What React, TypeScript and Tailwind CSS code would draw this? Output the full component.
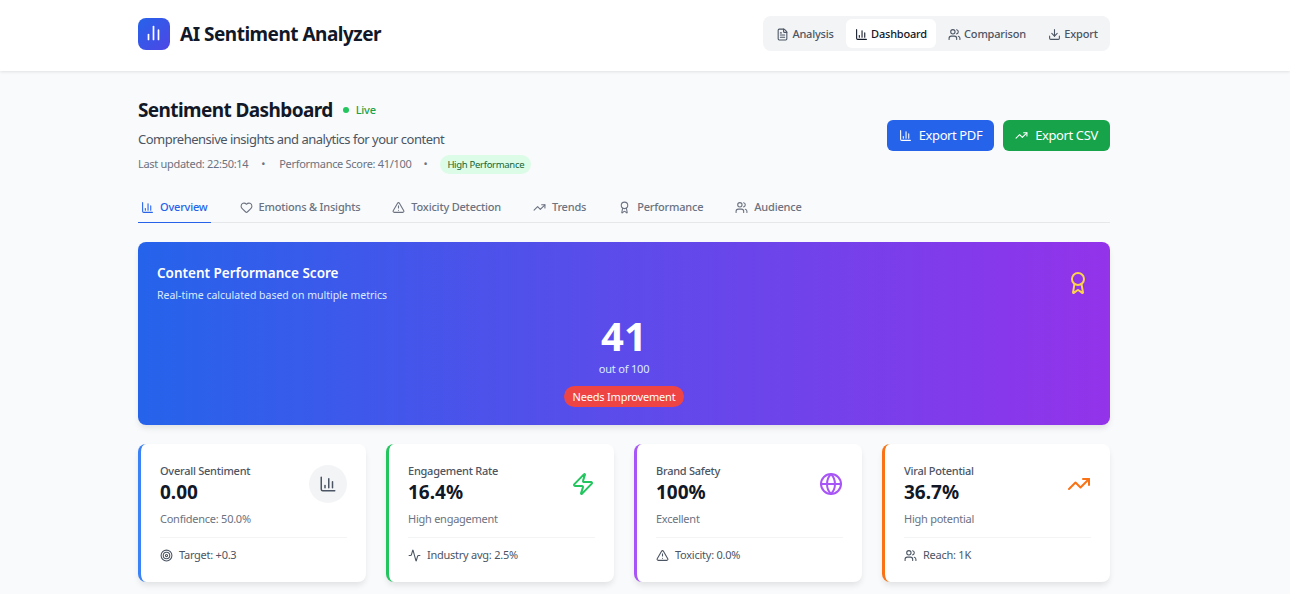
import {
  Activity,
  Award,
  ChartColumn,
  Download,
  FileText,
  Globe,
  Heart,
  Target,
  TrendingUp,
  TriangleAlert,
  Users,
  Zap,
} from "lucide-react"

const navItems = [
  { label: "Analysis", icon: FileText, className: "w-[70px] ml-[7px]" },
  { label: "Dashboard", icon: ChartColumn, className: "w-[90px] ml-[6px]", active: true },
  { label: "Comparison", icon: Users, className: "w-[90px] ml-[6px]" },
  { label: "Export", icon: Download, className: "w-[66px] ml-[8px]" },
]

const tabs = [
  { label: "Overview", icon: ChartColumn, active: true },
  { label: "Emotions & Insights", icon: Heart },
  { label: "Toxicity Detection", icon: TriangleAlert },
  { label: "Trends", icon: TrendingUp },
  { label: "Performance", icon: Award },
  { label: "Audience", icon: Users },
]

const cards = [
  {
    title: "Overall Sentiment",
    value: "0.00",
    note: "Confidence: 50.0%",
    foot: "Target: +0.3",
    footIcon: Target,
    border: "border-l-[#3b82f6]",
  },
  {
    title: "Engagement Rate",
    value: "16.4%",
    note: "High engagement",
    foot: "Industry avg: 2.5%",
    footIcon: Activity,
    border: "border-l-[#22c55e]",
    icon: <Zap className="h-6 w-6 text-[#22c55e]" />,
  },
  {
    title: "Brand Safety",
    value: "100%",
    note: "Excellent",
    foot: "Toxicity: 0.0%",
    footIcon: TriangleAlert,
    border: "border-l-[#a855f7]",
    icon: <Globe className="h-6 w-6 text-[#a855f7]" />,
  },
  {
    title: "Viral Potential",
    value: "36.7%",
    note: "High potential",
    foot: "Reach: 1K",
    footIcon: Users,
    border: "border-l-[#f97316]",
    icon: <TrendingUp className="h-6 w-6 text-[#f97316]" />,
  },
]

export default function App() {
  return (
    <div className="h-[594px] overflow-hidden bg-[#f9fafb] font-['Noto_Sans',sans-serif]">
      <header className="h-[71px] bg-white shadow-[0_1px_3px_rgba(0,0,0,0.1)]">
        <div className="ml-[138px] flex h-full w-[972px] items-center justify-between pb-[4px]">
          <div className="flex items-center gap-[10px]">
            <div className="flex h-8 w-8 items-center justify-center rounded-lg bg-linear-to-br/srgb from-[#2563eb] to-[#4f46e5]">
              <ChartColumnLogo />
            </div>
            <h1 className="mt-[1px] text-[19px] font-bold tracking-[-0.5px] text-[#111827]">AI Sentiment Analyzer</h1>
          </div>
          <nav className="flex h-[35px] w-[347px] items-center rounded-lg bg-[#f3f4f6]">
            {navItems.map((item) => (
              <div
                key={item.label}
                className={`flex h-[29px] shrink-0 items-center justify-center gap-[3px] rounded-md pt-[1px] text-[11px] font-medium tracking-[-0.2px] ${item.className} ${
                  item.active ? "bg-white text-[#111827]" : "text-[#4b5563]"
                }`}
              >
                <item.icon className="h-[13px] w-[13px]" />
                {item.label}
              </div>
            ))}
          </nav>
        </div>
      </header>

      <main className="ml-[138px] w-[972px]">
        <section className="flex items-center justify-between pt-[28px]">
          <div>
            <div className="flex items-center gap-[10px]">
              <h2 className="text-[19px] font-bold leading-[22px] tracking-[-0.6px] text-[#111827]">Sentiment Dashboard</h2>
              <div className="flex items-center gap-[7px] text-[11px] font-medium tracking-[-0.2px] text-[#16a34a]">
                <span className="h-[6px] w-[6px] rounded-full bg-[#22c55e]" />
                Live
              </div>
            </div>
            <p className="mt-[8px] text-[13px] leading-[20px] tracking-[-0.5px] text-[#4b5563]">
              Comprehensive insights and analytics for your content
            </p>
            <div className="mt-[5px] flex h-[20px] items-center text-[11px] tracking-[-0.3px] text-[#6b7280]">
              <span>Last updated: 22:50:14</span>
              <span className="ml-[13px]">•</span>
              <span className="ml-[14px]">Performance Score: 41/100</span>
              <span className="ml-[12px]">•</span>
              <span className="ml-[13px] rounded-full bg-[#dcfce7] px-[7px] py-[2px] text-[9.5px] leading-[15px] text-[#166534]">
                High Performance
              </span>
            </div>
          </div>
          <div className="flex gap-[9px] pb-[3px]">
            <button className="flex h-[31px] w-[107px] items-center justify-center gap-[7px] rounded-md bg-[#2563eb] pt-[1px] text-[13px] tracking-[-0.4px] text-white">
              <ChartColumn className="h-[13px] w-[13px]" />
              Export PDF
            </button>
            <button className="flex h-[31px] w-[107px] items-center justify-center gap-[7px] rounded-md bg-[#16a34a] pt-[1px] text-[13px] tracking-[-0.4px] text-white">
              <TrendingUp className="h-[13px] w-[13px]" />
              Export CSV
            </button>
          </div>
        </section>

        <div className="mt-[18px] flex h-[31px] gap-[26px] border-b border-[#e5e7eb]">
          {tabs.map((tab) => (
            <div
              key={tab.label}
              className={`-mb-px flex h-[31px] items-center gap-[6px] border-b px-[3px] text-[11px] font-medium tracking-[-0.2px] ${
                tab.active ? "border-[#2563eb] text-[#2563eb]" : "border-transparent text-[#6b7280]"
              }`}
            >
              <tab.icon className="h-[13px] w-[13px]" />
              {tab.label}
            </div>
          ))}
        </div>

        <section className="relative mt-[19px] h-[183px] rounded-lg bg-linear-to-r/srgb from-[#2563eb] to-[#9333ea] px-[19px] pt-[22px] text-white shadow-[0_4px_6px_-1px_rgba(0,0,0,0.1)]">
          <h3 className="text-[13.5px] font-semibold leading-[18px]">Content Performance Score</h3>
          <p className="mt-[5px] text-[10.5px] leading-[16px] text-[#dbeafe]">
            Real-time calculated based on multiple metrics
          </p>
          <Award className="absolute right-[20px] top-[29px] h-6 w-6 text-[#fcd34d]" />
          <div className="mt-[13px] flex flex-col items-center">
            <div className="text-[40px] font-bold leading-[40px]">41</div>
            <div className="mt-[5px] text-[11px] leading-[16px] tracking-[-0.2px] text-[#dbeafe]">out of 100</div>
            <div className="mt-[9px] rounded-full bg-[#ef4444] px-[9px] py-[2px] text-[11px] leading-[17px] tracking-[-0.2px]">
              Needs Improvement
            </div>
          </div>
        </section>

        <section className="mt-[19px] grid grid-cols-4 gap-[20px]">
          {cards.map((card) => (
            <article
              key={card.title}
              className={`h-[138px] rounded-lg border-l-[3px] bg-white px-[19px] pt-[19px] shadow-[0_4px_6px_-1px_rgba(0,0,0,0.1)] ${card.border}`}
            >
              <div className="flex justify-between">
                <div>
                  <div className="text-[11px] font-medium leading-[16px] tracking-[-0.25px] text-[#4b5563]">{card.title}</div>
                  <div className="text-[19px] font-bold leading-[26px] text-[#111827]">{card.value}</div>
                  <div className="mt-[6px] text-[11px] leading-[16px] tracking-[-0.25px] text-[#6b7280]">{card.note}</div>
                </div>
                {card.icon ? (
                  <div className="pt-[9px]">{card.icon}</div>
                ) : (
                  <div className="mt-[2px] flex h-[38px] w-[38px] items-center justify-center rounded-full bg-[#f3f4f6]">
                    <ChartColumn className="h-[18px] w-[18px] text-[#4b5563]" />
                  </div>
                )}
              </div>
              <div className="mt-[10px] flex items-center gap-[6px] border-t border-[#f3f4f6] pt-[9px] text-[11px] leading-[16px] tracking-[-0.25px] text-[#4b5563]">
                <card.footIcon className="h-[13px] w-[13px]" />
                {card.foot}
              </div>
            </article>
          ))}
        </section>
      </main>
    </div>
  )
}

function ChartColumnLogo() {
  return (
    <svg viewBox="0 0 20 20" className="h-5 w-5" fill="none" stroke="white" strokeWidth="1.7" strokeLinecap="round">
      <path d="M4.5 15.5V10.5" />
      <path d="M9.5 15.5V2.5" />
      <path d="M14.5 15.5V6" />
    </svg>
  )
}
